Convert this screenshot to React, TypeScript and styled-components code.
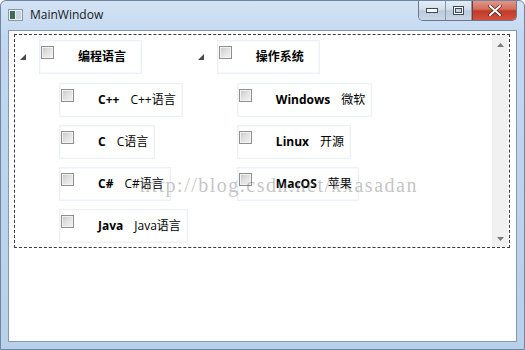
import React from 'react';
import styled, { createGlobalStyle } from 'styled-components';

const Global = createGlobalStyle`
  html, body { margin: 0; padding: 0; background: #ffffff; }
  body { width: 525px; height: 350px; overflow: hidden; }
`;

const Window = styled.div`
  width: 525px;
  height: 350px;
  box-sizing: border-box;
  display: flex;
  flex-direction: column;
  background: linear-gradient(180deg, #d3e3f5 0%, #c3d8f0 10%, #bcd3ec 60%, #b9d0ea 100%);
  border: 1px solid #6e85a3;
  border-radius: 6px 6px 0 0;
  position: relative;
  overflow: hidden;
`;

const TitleBar = styled.div`
  height: 29px;
  display: flex;
  align-items: flex-start;
  flex-shrink: 0;
`;

const TitleIcon = styled.div`
  margin: 8px 0 0 7px;
  width: 15px;
  height: 12px;
  display: flex;
`;

const TitleText = styled.div`
  margin: 6px 0 0 7px;
  font-family: 'Open Sans', 'Noto Sans', sans-serif;
  font-size: 12px;
  line-height: 16px;
  color: #1a1a1a;
  flex: 1;
`;

const CaptionGroup = styled.div`
  display: flex;
  margin: -1px 7px 0 0;
  height: 20px;
  border: 1px solid #6b7890;
  border-top: none;
  border-radius: 0 0 5px 5px;
  overflow: hidden;
`;

const CaptionButton = styled.div<{ $w: number; $close?: boolean }>`
  width: ${p => p.$w}px;
  height: 100%;
  display: flex;
  align-items: center;
  justify-content: center;
  border-left: ${p => (p.$close ? '1px solid #7a3b35' : 'none')};
  border-right: ${p => (p.$close ? 'none' : '1px solid #8a98ad')};
  background: ${p =>
    p.$close
      ? 'linear-gradient(180deg, #e59a8a 0%, #d4705e 45%, #c23a27 55%, #d2503f 100%)'
      : 'linear-gradient(180deg, #e6eef7 0%, #d4dfec 45%, #bccbdc 55%, #c9d6e6 100%)'};
`;

const ClientArea = styled.div`
  flex: 1;
  margin: 0 7px 7px 7px;
  background: #ffffff;
  border: 1px solid #8398b5;
  display: flex;
  flex-direction: column;
  padding: 3px 6px 0 5px;
  position: relative;
`;

const TreeView = styled.div`
  height: 214px;
  box-sizing: border-box;
  border: 1px dashed #3a3a3a;
  display: flex;
`;

const TreeContent = styled.div`
  flex: 1;
  display: flex;
  align-items: flex-start;
  gap: 5px;
  padding-top: 5px;
`;

const ScrollBar = styled.div`
  width: 16px;
  background: #f1f1f1;
  display: flex;
  flex-direction: column;
  justify-content: space-between;
  align-items: center;
  padding: 8px 0 6px;
  margin-right: 1px;
`;

const RootColumn = styled.div`
  display: flex;
  flex-direction: column;
`;

const RootRow = styled.div`
  display: flex;
  align-items: center;
`;

const Expander = styled.div`
  width: 24px;
  box-sizing: border-box;
  padding-left: 5px;
  display: flex;
  align-items: center;
`;

const ChildList = styled.div`
  display: flex;
  flex-direction: column;
  gap: 8px;
  margin: 9px 0 0 44px;
`;

const ItemBox = styled.div<{ $root?: boolean }>`
  height: 34px;
  box-sizing: border-box;
  display: flex;
  align-items: center;
  border: 1px solid #ebf1f9;
  box-shadow: inset 0 0 0 1px #f7f9fd;
  padding: 0 ${p => (p.$root ? 15 : 6)}px 0 1px;
  background: #ffffff;
  align-self: flex-start;
`;

const CheckBox = styled.div`
  width: 13px;
  height: 13px;
  box-sizing: border-box;
  border: 1px solid #8e8f8f;
  background: linear-gradient(135deg, #c6c6c6 0%, #e2e2e2 50%, #f4f4f4 100%);
  box-shadow: inset 0 0 0 1px #f2f2f2;
  align-self: flex-start;
  margin-top: 5px;
  flex-shrink: 0;
`;

const Label = styled.span<{ $bold?: boolean }>`
  font-family: 'Open Sans', 'Noto Sans CJK SC', sans-serif;
  font-size: 12px;
  line-height: 16px;
  font-weight: ${p => (p.$bold ? 700 : 400)};
  color: #000;
  white-space: nowrap;
`;

const LabelGroup = styled.div`
  display: flex;
  align-items: center;
  gap: 11px;
  margin-left: 24px;
`;

const Watermark = styled.div`
  position: absolute;
  left: 131px;
  top: 143px;
  font-family: 'Liberation Serif', serif;
  font-size: 20px;
  letter-spacing: 1.5px;
  color: rgba(110, 110, 110, 0.42);
  pointer-events: none;
  white-space: nowrap;
`;

const Arrow = ({ up }: { up?: boolean }) => (
  <svg width="7" height="4" viewBox="0 0 7 4">
    <path d={up ? 'M3.5 0 L7 4 L0 4 Z' : 'M0 0 L7 0 L3.5 4 Z'} fill="#7a7a7a" />
  </svg>
);

const ExpandedGlyph = () => (
  <svg width="6" height="6" viewBox="0 0 6 6">
    <path d="M6 0 L6 6 L0 6 Z" fill="#4a4a4a" />
  </svg>
);

const data = [
  {
    title: '编程语言',
    children: [
      ['C++', 'C++语言'],
      ['C', 'C语言'],
      ['C#', 'C#语言'],
      ['Java', 'Java语言'],
    ],
  },
  {
    title: '操作系统',
    children: [
      ['Windows', '微软'],
      ['Linux', '开源'],
      ['MacOS', '苹果'],
    ],
  },
];

export default function App() {
  return (
    <>
      <Global />
      <Window>
        <TitleBar>
          <TitleIcon>
            <svg width="15" height="12" viewBox="0 0 15 12">
              <rect x="0.5" y="0.5" width="14" height="11" fill="#e9edf1" stroke="#8d97a3" />
              <rect x="2" y="2" width="5" height="8" fill="#3d6b57" />
              <rect x="8" y="2" width="5" height="8" fill="#c7d3de" />
            </svg>
          </TitleIcon>
          <TitleText>MainWindow</TitleText>
          <CaptionGroup>
            <CaptionButton $w={26}>
              <svg width="12" height="5" viewBox="0 0 12 5">
                <rect x="0.5" y="0.5" width="11" height="4" fill="#ffffff" stroke="#3c4a5e" />
              </svg>
            </CaptionButton>
            <CaptionButton $w={25}>
              <svg width="11" height="9" viewBox="0 0 11 9">
                <rect x="0.5" y="0.5" width="10" height="8" fill="#ffffff" stroke="#3c4a5e" />
                <rect x="2.5" y="2.5" width="6" height="4" fill="#c9d5e3" stroke="#3c4a5e" />
              </svg>
            </CaptionButton>
            <CaptionButton $w={43} $close>
              <svg width="14" height="11" viewBox="0 0 14 11">
                <path d="M2 1 L12 10 M12 1 L2 10" stroke="#4a1a14" strokeWidth="3.4" strokeLinecap="round" />
                <path d="M2 1 L12 10 M12 1 L2 10" stroke="#ffffff" strokeWidth="2" strokeLinecap="round" />
              </svg>
            </CaptionButton>
          </CaptionGroup>
        </TitleBar>
        <ClientArea>
          <TreeView>
            <TreeContent>
              {data.map(root => (
                <RootColumn key={root.title}>
                  <RootRow>
                    <Expander>
                      <ExpandedGlyph />
                    </Expander>
                    <ItemBox $root>
                      <CheckBox />
                      <LabelGroup>
                        <Label $bold>{root.title}</Label>
                      </LabelGroup>
                    </ItemBox>
                  </RootRow>
                  <ChildList>
                    {root.children.map(([name, desc]) => (
                      <ItemBox key={name}>
                        <CheckBox />
                        <LabelGroup>
                          <Label $bold>{name}</Label>
                          <Label>{desc}</Label>
                        </LabelGroup>
                      </ItemBox>
                    ))}
                  </ChildList>
                </RootColumn>
              ))}
            </TreeContent>
            <ScrollBar>
              <Arrow up />
              <Arrow />
            </ScrollBar>
          </TreeView>
          <Watermark>http://blog.csdn.net/xxasadan</Watermark>
        </ClientArea>
      </Window>
    </>
  );
}
